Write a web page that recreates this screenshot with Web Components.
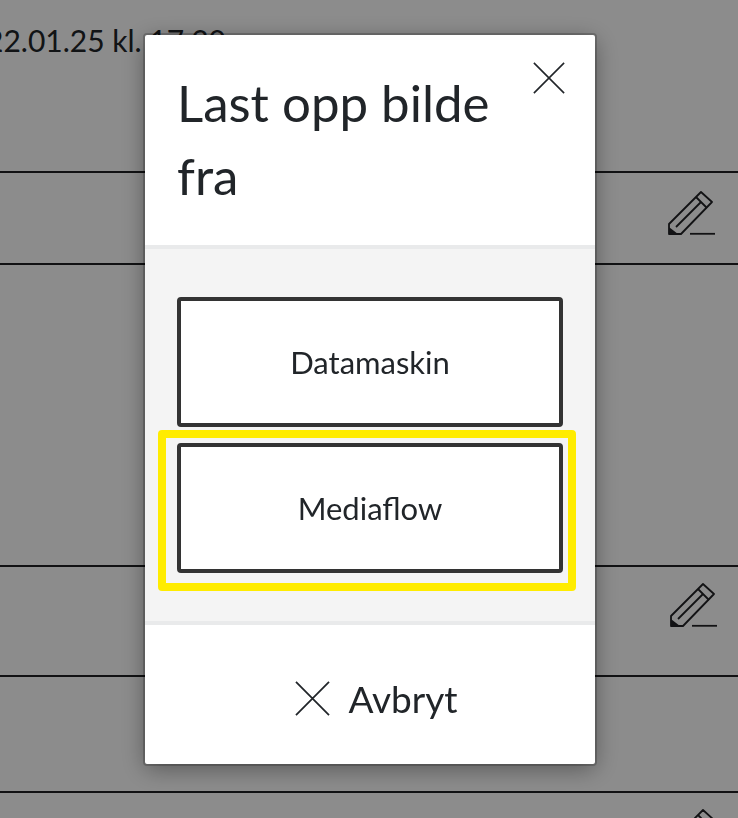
<!DOCTYPE html>
<html lang="no">
<head>
<meta charset="utf-8">
<title>Last opp bilde</title>
<style>
    html, body{
        margin: 0;
        height: 100%;
        overflow: hidden;
        background: #fff;
        color: #212529;
        font-family: Lato, "Noto Sans", sans-serif;
    }
    .date{
        display: block;
        margin: 18px 0 0 -14px;
        font-size: 30px;
        line-height: 45px;
        white-space: nowrap;
    }
</style>
</head>
<body>
<list-page>
    <list-row height="173"><span class="date">22.01.25 kl. 17.30</span></list-row>
    <list-row height="92" icon-top="18" icon-right="23"></list-row>
    <list-row height="302"></list-row>
    <list-row height="110" icon-top="16" icon-right="21"></list-row>
    <list-row height="116"></list-row>
    <list-row height="60" icon-top="16" icon-right="21"></list-row>
</list-page>

<upload-dialog heading="Last opp bilde fra">
    <choice-button>Datamaskin</choice-button>
    <choice-button focused>Mediaflow</choice-button>
</upload-dialog>

<script>
const cross = size => `<svg viewBox="0 0 36 36" width="${size}" height="${size}" fill="none" stroke="currentColor" stroke-width="1.8"><path d="M1 1 35 35M35 1 1 35"/></svg>`;

class ListPage extends HTMLElement{
    constructor(){
        super();
        this.attachShadow({mode: 'open'});
        this.shadowRoot.innerHTML = `
            <style>
                :host{
                    display: block;
                    height: 818px;
                    overflow: hidden;
                }
                .backdrop{
                    position: fixed;
                    inset: 0;
                    background-color: rgba(0, 0, 0, .45);
                }
            </style>
            <slot></slot>
            <div class="backdrop"></div>
        `;
    }
}

class ListRow extends HTMLElement{
    constructor(){
        super();
        this.attachShadow({mode: 'open'});
        const top = this.getAttribute('icon-top');
        const right = this.getAttribute('icon-right');
        this.shadowRoot.innerHTML = `
            <style>
                :host{
                    display: flex;
                    justify-content: flex-end;
                    box-sizing: border-box;
                    border-bottom: 2px solid #1f2023;
                    overflow: hidden;
                }
                .content{
                    flex: 1;
                    min-width: 0;
                }
                svg{
                    margin: ${top}px ${right}px 0 0;
                    flex: none;
                }
            </style>
            <div class="content"><slot></slot></div>
            ${top ? `<svg viewBox="0 0 47 45" width="47" height="45" fill="none" stroke="#212225" stroke-width="1.8">
                <path d="M1 43V33L33 1 44 11 13 43Z" stroke-linejoin="round"/>
                <path d="M28 6 39 17"/>
                <path d="M8 36 33 11"/>
                <path d="M2 38 6 41H2Z" fill="#212225"/>
                <path d="M22 42.8H47"/>
            </svg>` : ''}
        `;
        this.style.height = this.getAttribute('height') + 'px';
    }
}

class UploadDialog extends HTMLElement{
    constructor(){
        super();
        this.attachShadow({mode: 'open'});
        this.shadowRoot.innerHTML = `
            <style>
                :host{
                    display: flex;
                    flex-direction: column;
                    position: fixed;
                    left: 145px;
                    top: 35px;
                    width: 450px;
                    height: 729px;
                    background: #fff;
                    color: #212529;
                    border-radius: 2px;
                    outline: 2px solid rgba(0, 0, 0, .2);
                    box-shadow: 0 5px 24px rgba(0, 0, 0, .38);
                }
                header{
                    display: flex;
                    justify-content: space-between;
                    height: 210px;
                    box-sizing: border-box;
                    padding: 31px 30px 0 32px;
                }
                h2{
                    margin: 0;
                    width: 345px;
                    font-size: 51px;
                    font-weight: 400;
                    line-height: 73px;
                }
                .close{
                    flex: none;
                    margin-top: -4px;
                    height: 32px;
                }
                .body{
                    display: flex;
                    flex-direction: column;
                    gap: 16px;
                    height: 380px;
                    box-sizing: border-box;
                    padding: 48px 32px 0;
                    background: #f4f4f4;
                    border-top: 4px solid #e9eaeb;
                    border-bottom: 4px solid #e9eaeb;
                }
                footer{
                    flex: 1;
                    display: flex;
                    justify-content: center;
                    align-items: center;
                    gap: 18px;
                    font-size: 37px;
                    padding: 8px 0 0 13px;
                }
            </style>
            <header>
                <h2>${this.getAttribute('heading')}</h2>
                <span class="close">${cross(32)}</span>
            </header>
            <div class="body"><slot></slot></div>
            <footer>${cross(35)}<span>Avbryt</span></footer>
        `;
    }
}

class ChoiceButton extends HTMLElement{
    constructor(){
        super();
        this.attachShadow({mode: 'open'});
        this.shadowRoot.innerHTML = `
            <style>
                :host{
                    display: flex;
                    align-items: center;
                    justify-content: center;
                    position: relative;
                    box-sizing: border-box;
                    height: 130px;
                    background: #fff;
                    border: 4px solid #333;
                    border-radius: 4px;
                    font-size: 31px;
                }
                :host([focused])::after{
                    content: "";
                    position: absolute;
                    top: -17px;
                    right: -17px;
                    bottom: -22px;
                    left: -23px;
                    border: 8px solid #ffec00;
                    border-radius: 4px;
                }
            </style>
            <slot></slot>
        `;
    }
}

customElements.define('list-page', ListPage);
customElements.define('list-row', ListRow);
customElements.define('upload-dialog', UploadDialog);
customElements.define('choice-button', ChoiceButton);
</script>
</body>
</html>
